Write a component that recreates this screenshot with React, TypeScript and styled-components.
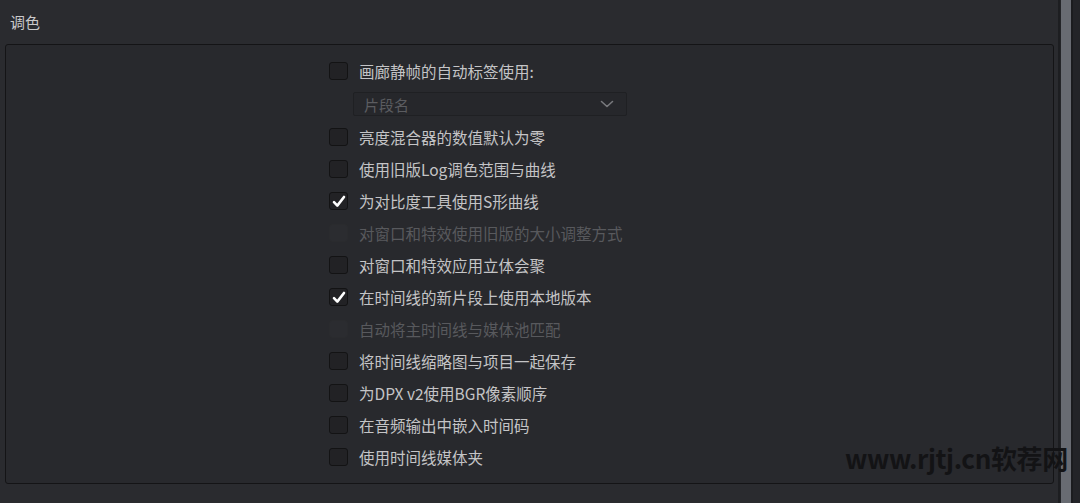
import React from 'react'
import styled, { createGlobalStyle } from 'styled-components'

const GlobalStyle = createGlobalStyle`
    html, body {
        margin: 0;
        padding: 0;
        background: #2a2b2f;
        overflow: hidden;
    }
    body {
        font-family: "Noto Sans CJK SC", "Noto Sans", sans-serif;
    }
`

interface Option {
    label: string
    checked?: boolean
    disabled?: boolean
}

const options: Option[] = [
    { label: '亮度混合器的数值默认为零' },
    { label: '使用旧版Log调色范围与曲线' },
    { label: '为对比度工具使用S形曲线', checked: true },
    { label: '对窗口和特效使用旧版的大小调整方式', disabled: true },
    { label: '对窗口和特效应用立体会聚' },
    { label: '在时间线的新片段上使用本地版本', checked: true },
    { label: '自动将主时间线与媒体池匹配', disabled: true },
    { label: '将时间线缩略图与项目一起保存' },
    { label: '为DPX v2使用BGR像素顺序' },
    { label: '在音频输出中嵌入时间码' },
    { label: '使用时间线媒体夹' },
]

const CheckMark = () => (
    <svg width="14" height="13" viewBox="0 0 14 13">
        <path d="M2 7.2 L5.3 10.6 L12 2" fill="none" stroke="#fff" strokeWidth="2.6" strokeLinecap="round" strokeLinejoin="round" />
    </svg>
)

const Chevron = () => (
    <svg width="14" height="8" viewBox="0 0 14 8">
        <path d="M1.5 1.5 L7 6.5 L12.5 1.5" fill="none" stroke="#78797d" strokeWidth="1.6" strokeLinecap="round" strokeLinejoin="round" />
    </svg>
)

const CheckRow: React.FC<{ option: Option }> = ({ option }) => (
    <Row>
        <Box $disabled={option.disabled}>
            {option.checked && <CheckMark />}
        </Box>
        <Label $disabled={option.disabled}>{option.label}</Label>
    </Row>
)

const App: React.FC = () => {
    return (
        <>
            <GlobalStyle />
            <Page>
                <Main>
                    <Title>调色</Title>
                    <Panel>
                        <List>
                            <Row>
                                <Box />
                                <Label>画廊静帧的自动标签使用:</Label>
                            </Row>
                            <Select>
                                <span>片段名</span>
                                <Chevron />
                            </Select>
                            {options.map((o) => (
                                <CheckRow key={o.label} option={o} />
                            ))}
                        </List>
                    </Panel>
                </Main>
                <ScrollTrack>
                    <ScrollThumb />
                </ScrollTrack>
                <Watermark>www.rjtj.cn软荐网</Watermark>
            </Page>
        </>
    )
}

const Page = styled.div`
    position: relative;
    display: flex;
    width: 1080px;
    height: 503px;
    background: #2a2b2f;
`

const Main = styled.div`
    flex: 1;
    display: flex;
    flex-direction: column;
    padding: 0 4px 0 5px;
`

const Title = styled.div`
    height: 44px;
    display: flex;
    align-items: center;
    padding-left: 5px;
    padding-bottom: 2px;
    box-sizing: border-box;
    color: #c9c9cb;
    font-size: 15px;
`

const Panel = styled.div`
    height: 440px;
    box-sizing: border-box;
    border: 1.5px solid #141416;
    border-radius: 3px;
    background: #28292d;
    display: flex;
    padding-left: 323px;
`

const List = styled.div`
    display: flex;
    flex-direction: column;
    padding-top: 10px;
`

const Row = styled.div`
    height: 32px;
    display: flex;
    align-items: center;
    gap: 11px;
`

const Box = styled.div<{ $disabled?: boolean }>`
    width: 19px;
    height: 18px;
    box-sizing: border-box;
    border-radius: 3px;
    border: 1px solid ${(p) => (p.$disabled ? '#2a2b2e' : '#131314')};
    background: ${(p) => (p.$disabled ? '#2b2c30' : '#222225')};
    display: flex;
    align-items: center;
    justify-content: center;
    flex-shrink: 0;
`

const Label = styled.span<{ $disabled?: boolean }>`
    font-size: 15.5px;
    white-space: nowrap;
    color: ${(p) => (p.$disabled ? '#58595d' : '#c4c4c6')};
`

const Select = styled.div`
    margin: 5px 0 5px 24px;
    width: 274px;
    height: 24px;
    box-sizing: border-box;
    border: 1px solid #1f2023;
    border-radius: 2px;
    background: #26272b;
    display: flex;
    align-items: center;
    justify-content: space-between;
    padding: 0 12px 0 10px;
    color: #5b5c60;
    font-size: 15px;
`

const ScrollTrack = styled.div`
    width: 22px;
    display: flex;
    box-sizing: border-box;
    border-left: 2px solid #1d1e21;
    padding-left: 1px;
    background: #232428;
`

const ScrollThumb = styled.div`
    width: 10px;
    background: #686b72;
    border-right: 2px solid #1b1c1f;
`

const Watermark = styled.div`
    position: absolute;
    left: 845px;
    top: 439px;
    font-family: "Noto Sans CJK SC", "Noto Sans", sans-serif;
    font-size: 26px;
    font-weight: 700;
    letter-spacing: -0.4px;
    color: #131315;
    white-space: nowrap;
`

export default App
